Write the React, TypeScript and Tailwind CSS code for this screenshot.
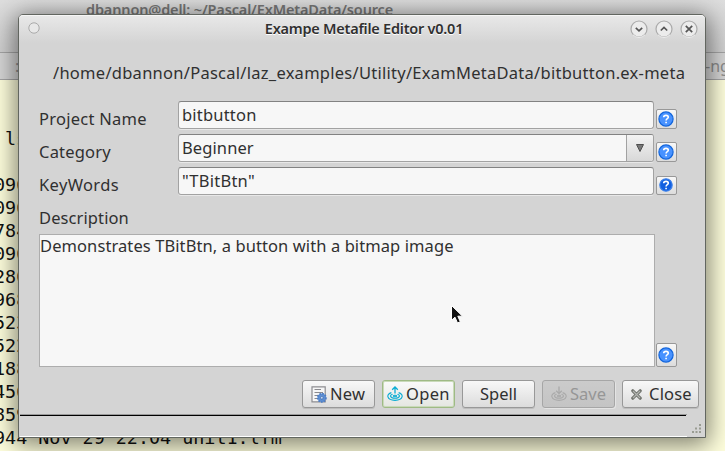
import type { ReactNode } from "react";

const listing = ["096", "096", "784", "096", "280", "968", "523", "522", "188", "456", "859", "944 Nov 29 22:04 unit1.lfm"];

function Terminal() {
  return (
    <div className="flex h-[451px] w-[725px] flex-col overflow-hidden bg-[#ffffdd]">
      <div className="flex h-[52px] shrink-0 bg-gradient-to-b from-[#dedede] to-[#d0d0d0] pl-[86px] font-['Noto_Sans'] text-[14.5px] leading-[19px] font-semibold text-[#777] whitespace-pre">
        <span className="tracking-[-0.15px]">dbannon@dell: ~/Pascal/ExMetaData/source</span>
      </div>
      <div className="flex h-[28px] shrink-0 items-center justify-between border-y border-[#a5a5a5] bg-[#d6d6d6] pl-[15px] font-['Noto_Sans'] text-[16px] text-[#8c8c8c]">
        <span>:</span>
        <span className="w-[20px] whitespace-nowrap">-ng</span>
      </div>
      <div className="-ml-[6px] pt-[47px] font-['DejaVu_Sans_Mono'] text-[18.4px] leading-[23px] text-[#111] whitespace-pre">
        <div> ls</div>
        <div className="h-[23px]" />
        {listing.map((line, i) => (
          <div key={i}>{line}</div>
        ))}
      </div>
    </div>
  );
}

function RoundButton({ d }: { d: string }) {
  return (
    <svg width="18" height="18" viewBox="0 0 18 18">
      <circle cx="9" cy="9" r="8" fill="#ececec" stroke="#aaa" strokeWidth="1.2" />
      <path d="M3 14.8a8.2 8.2 0 0 0 12 0" fill="none" stroke="#fff" strokeWidth="0.8" />
      <path d={d} fill="none" stroke="#555" strokeWidth="1.7" />
    </svg>
  );
}

function Help({ className, solid }: { className: string; solid?: boolean }) {
  return (
    <button className={"flex w-[21px] items-center justify-center rounded-[2px] border border-[#989898] bg-gradient-to-b from-[#f8f8f8] to-[#dcdcdc] pr-px pb-px " + className}>
      <svg className="shrink-0" width="16" height="16" viewBox="0 0 16 16">
        <circle cx="8" cy="8" r={solid ? 6.2 : 7.1} fill={solid ? "#125fe0" : "#4892ff"} stroke={solid ? "#3c80ea" : "#1265dc"} strokeWidth="1.2" />
        <path d="M5.7 6.2C5.7 3.7 10.3 3.7 10.3 6.2C10.3 7.7 8.1 7.6 8.1 9.5M8.1 10.7V12.2" fill="none" stroke="#fff" strokeWidth="1.6" />
      </svg>
    </button>
  );
}

function Ripple({ color, down }: { color: string; down?: boolean }) {
  return (
    <svg width="16" height="16" viewBox="0 0 16 16" fill="none" stroke={color} strokeWidth="1.1">
      <path d="M4.4 6.6C-1 8-.6 14.2 8 14.4C16.6 14.2 17 8 11.6 6.6" />
      <path d="M5.6 8.2C2.4 9 2.8 12 8 12.2C13.2 12 13.6 9 10.4 8.2" />
      <ellipse cx="8" cy="10" rx="1.6" ry="0.7" />
      <path d={down ? "M8 0.5V7.5M5.2 4.8L8 7.6L10.8 4.8" : "M8 7.5V1M5.2 3.8L8 1L10.8 3.8"} strokeWidth="1.3" />
    </svg>
  );
}

function NewIcon() {
  return (
    <svg width="16" height="17" viewBox="0 0 16 17" fill="none">
      <path d="M1 .8H14.2V15.8H1Z" fill="#f6f6f6" stroke="#8d8d91" strokeWidth="1.2" />
      <path d="M3.5 3.5H10M3.5 6.5H12M3.5 9.5H7M3.5 12.5H6" stroke="#8a8a8e" />
      <circle cx="10.8" cy="11.8" r="4.2" fill="#5d8ed2" stroke="#4a7cc6" strokeWidth="1.6" strokeDasharray="1.7 1.1" />
      <circle cx="10.8" cy="11.8" r="1.3" fill="#d4e4fa" stroke="#315fa5" strokeWidth=".6" />
    </svg>
  );
}

function Action({ children, className }: { children: ReactNode; className: string }) {
  return (
    <button className={"flex h-[28px] items-center rounded-[3px] border bg-gradient-to-b whitespace-nowrap " + className}>
      {children}
    </button>
  );
}

const normal = "border-[#989898] from-[#f8f8f8] to-[#dcdcdc] shadow-[0_1px_0_#bdbdbd]";
const field = "h-[28px] w-[476px] rounded-[3px] border border-[#a2a2a2] border-t-[#828282] bg-[#f7f7f7] shadow-[0_1px_0_#e8e8e8]";

function Row({ label, labelClass, help, children }: { label: string; labelClass: string; help: ReactNode; children: ReactNode }) {
  return (
    <div className="flex h-[28px] items-end">
      <div className={"h-[21px] w-[139px] shrink-0 leading-[22px] whitespace-nowrap " + labelClass}>{label}</div>
      {children}
      <div className="ml-[2px]">{help}</div>
    </div>
  );
}

function Editor() {
  return (
    <div className="absolute top-[14px] left-[18px] flex h-[424px] w-[688px] flex-col rounded-t-[5px] border border-[#626660] bg-[#d4d4d4] font-['Noto_Sans'] text-[16.5px] text-[#303030] shadow-[0_4px_24px_3px_rgba(0,0,0,0.5)]">
      <div className="flex h-[28px] shrink-0 items-center rounded-t-[4px] border-t border-[#f6f6f6] bg-gradient-to-b from-[#e8e8e8] to-[#d4d4d4] pr-[7px] pl-[9px]">
        <svg className="-mt-[3px]" width="12" height="12" viewBox="0 0 12 12">
          <circle cx="6" cy="6" r="5.2" fill="#e8e8e8" stroke="#aaa" />
        </svg>
        <div className="-mt-[2px] flex-1 pl-[58px] text-center text-[14.5px] font-semibold tracking-[-0.24px] whitespace-nowrap [text-shadow:0_1px_0_#fff]">Exampe Metafile Editor v0.01</div>
        <div className="-mt-[2px] flex gap-[7px]">
          <RoundButton d="M5.8 7.8L9 10.8L12.2 7.8" />
          <RoundButton d="M5.8 10.5L9 7.5L12.2 10.5" />
          <RoundButton d="M5.8 5.8L12.2 12.2M12.2 5.8L5.8 12.2" />
        </div>
      </div>
      <div className="mt-[19px] h-[22px] pl-[34px] leading-[22px] tracking-[0.265px] whitespace-nowrap">
        <span>/home/dbannon/Pascal/laz_examples/Utility/ExamMetaData/bitbutton.ex-meta</span>
      </div>
      <div className="mt-[17px] flex flex-col gap-[5px] pl-[20px]">
        <Row label="Project Name" labelClass="tracking-[0.25px]" help={<Help className="h-[20px]" />}>
          <div className={field + " pl-[3px] leading-[25px] tracking-[0.2px]"}><span>bitbutton</span></div>
        </Row>
        <Row label="Category" labelClass="tracking-[0.2px]" help={<Help className="h-[20px]" />}>
          <div className={field + " flex pl-[3px] leading-[25px] tracking-[0.1px]"}>
            <span className="flex-1">Beginner</span>
            <div className="flex w-[27px] items-center justify-center rounded-r-[2px] border-l border-[#a2a2a2] bg-gradient-to-b from-[#f3f3f3] to-[#d8d8d8]">
              <svg width="8" height="8" viewBox="0 0 8 8"><path d="M.5.5H7.5L4 7.5Z" fill="#777" stroke="#4f4f4f" /></svg>
            </div>
          </div>
        </Row>
        <Row label="KeyWords" labelClass="tracking-[0.35px]" help={<Help solid className="h-[19px]" />}>
          <div className={field + " pl-[3px] leading-[25px] tracking-[0.25px]"}><span>"TBitBtn"</span></div>
        </Row>
      </div>
      <div className="mt-[12px] h-[27px] pl-[20px] leading-[22px] tracking-[0.1px]"><span>Description</span></div>
      <div className="flex h-[133px] shrink-0 items-end pl-[20px]">
        <div className="h-[133px] w-[616px] border border-[#adadad] bg-[#f7f7f7] leading-[22px] tracking-[0.09px]"><span>Demonstrates TBitBtn, a button with a bitmap image</span></div>
        <div className="ml-px"><Help className="h-[24px]" /></div>
      </div>
      <div className="mt-[13px] flex gap-[7px] pl-[283px]">
        <Action className={"w-[73px] gap-[3px] pl-[8px] tracking-[0.3px] " + normal}><NewIcon /><span>New</span></Action>
        <Action className="w-[73px] gap-[3px] border-[#9fba85] from-[#fafafa] to-[#e4e6e1] pl-[4px] tracking-[0.3px] shadow-[inset_0_0_0_1px_#c9dab9]"><Ripple color="#08acd3" /><span>Open</span></Action>
        <Action className={"w-[73px] justify-center " + normal}><span>Spell</span></Action>
        <Action className="w-[73px] gap-[3px] border-[#a6a6a6] from-[#cbcbcb] to-[#c4c4c4] pl-[8px] text-[#969696] shadow-[1px_1px_0_#e4e4e4]"><Ripple color="#aaa" down /><span>Save</span></Action>
        <Action className={"w-[77px] gap-[7px] pl-[8px] tracking-[0.2px] " + normal}>
          <svg width="11" height="11" viewBox="0 0 11 11"><path d="M1.8 1.8L9.2 9.2M9.2 1.8L1.8 9.2" stroke="#72756f" strokeWidth="3.2" strokeLinecap="round" /><path d="M2 2L9 9M9 2L2 9" stroke="#b3b5b1" strokeWidth="1.1" /></svg>
          <span>Close</span>
        </Action>
      </div>
      <div className="mt-[6px] ml-px h-[23px] w-[667px] shrink-0 border-t border-b border-t-[#999] border-b-white">
        <div className="flex h-[21px] w-[666px] justify-end border-t border-black">
          <svg className="mt-[8px] mr-[-15px] shrink-0" width="9" height="10" viewBox="0 0 9 10"><path d="M7 0H9V2H7ZM3 3.5H5V5.5H3ZM7 3.5H9V5.5H7ZM0 7H2V9H0ZM3.5 7H5.5V9H3.5ZM7 7H9V9H7Z" fill="#999c92" /></svg>
        </div>
      </div>
    </div>
  );
}

export default function App() {
  return (
    <main className="relative h-[451px] w-[725px] overflow-hidden">
      <Terminal />
      <Editor />
      <svg className="absolute top-[304px] left-[450px]" width="14" height="21" viewBox="0 0 14 21">
        <path d="M1.5 1.5V16.3L5 13.2L7.5 19L10.3 17.7L7.8 12.2H12.5Z" fill="#111" stroke="#fff" />
      </svg>
    </main>
  );
}
